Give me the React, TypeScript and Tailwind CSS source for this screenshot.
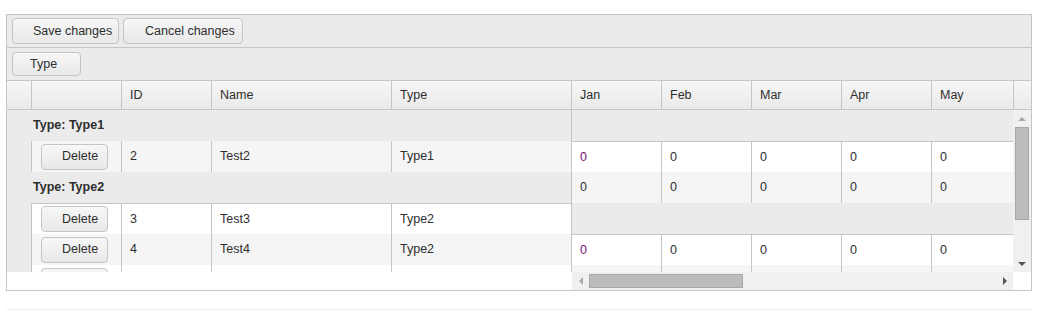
import React from 'react';

const months = ['Jan', 'Feb', 'Mar', 'Apr', 'May'];

function KButton({ label, className = '' }: { label: string; className?: string }) {
  return (
    <button
      className={`flex items-center rounded-[4px] border border-[#c5c5c5] bg-linear-to-b from-[#f7f7f7] to-[#e8e8e8] text-[#2e2e2e] ${className}`}
    >
      {label}
    </button>
  );
}

function GroupRow({ label }: { label: string }) {
  return (
    <div className="flex h-[31px] shrink-0 items-center bg-[#ebebeb] pl-[26px] font-bold">{label}</div>
  );
}

interface LockedRowProps {
  id?: string;
  name?: string;
  type?: string;
  bg: string;
  topBorder?: boolean;
  partial?: boolean;
}

function LockedRow({ id, name, type, bg, topBorder, partial }: LockedRowProps) {
  const cell = `flex items-center border-l border-[#c5c5c5] ${topBorder ? 'border-t' : ''} ${bg}`;
  return (
    <div className="flex h-[31px] shrink-0">
      <div className="w-[24px] bg-[#ebebeb]" />
      <div className={`${cell} w-[90px] pl-[9px]`}>
        {/* the last row is cut by the scroll edge, only the top of its button shows */}
        <KButton label={partial ? '' : 'Delete'} className="h-[26px] w-[67px] shrink-0 pl-[20px]" />
      </div>
      <div className={`${cell} w-[90px] pl-[8px]`}>{id}</div>
      <div className={`${cell} w-[180px] pl-[8px]`}>{name}</div>
      <div className={`${cell} w-[180px] pl-[8px]`}>{type}</div>
    </div>
  );
}

interface ValueRowProps {
  bg: string;
  topBorder?: boolean;
  purple?: boolean;
  empty?: boolean;
}

function ValueRow({ bg, topBorder, purple, empty }: ValueRowProps) {
  return (
    <div className={`flex h-[31px] w-[449px] shrink-0 ${bg} ${topBorder ? 'border-t border-[#c5c5c5]' : ''}`}>
      {months.map((m, i) => (
        <div
          key={m}
          className={`flex items-center pl-[8px] ${
            i === 0 ? 'w-[89px]' : 'w-[90px] border-l border-[#c5c5c5]'
          } ${i === 0 && purple ? 'text-[#7a0f7a]' : ''}`}
        >
          {empty ? '' : '0'}
        </div>
      ))}
    </div>
  );
}

export default function App() {
  return (
    <div
      className="min-h-screen bg-white pl-[6px] pt-[14px] text-[12.5px] text-[#2e2e2e]"
      style={{ fontFamily: '"Liberation Sans", Arial, sans-serif' }}
    >
      <div className="w-[1026px] border border-[#c5c5c5]">
        {/* Toolbar */}
        <div className="flex h-[33px] items-center gap-[4px] border-b border-[#c5c5c5] bg-[#ebebeb] px-[5px]">
          <KButton label="Save changes" className="h-[26px] w-[107px] pl-[20px]" />
          <KButton label="Cancel changes" className="h-[26px] w-[120px] pl-[21px]" />
        </div>

        {/* Group panel */}
        <div className="flex h-[33px] items-center border-b border-[#c5c5c5] bg-[#ebebeb] px-[5px]">
          <KButton label="Type" className="h-[24px] w-[69px] pl-[17px]" />
        </div>

        {/* Header */}
        <div className="flex h-[29px] border-b border-[#c5c5c5] bg-linear-to-b from-[#f6f6f6] to-[#eaeaea]">
          <div className="flex w-[565px] border-r border-[#c5c5c5]">
            <div className="w-[25px] border-r border-[#c5c5c5]" />
            <div className="w-[90px] border-r border-[#c5c5c5]" />
            <div className="flex w-[90px] items-center border-r border-[#c5c5c5] pl-[8px]">ID</div>
            <div className="flex w-[180px] items-center border-r border-[#c5c5c5] pl-[8px]">Name</div>
            <div className="flex w-[179px] items-center pl-[8px]">Type</div>
          </div>
          <div className="flex w-[441px] overflow-hidden">
            {months.map((m, i) => (
              <div
                key={m}
                className={`flex shrink-0 items-center pl-[8px] ${
                  i === 0 ? 'w-[89px]' : 'w-[90px] border-l border-[#c5c5c5]'
                }`}
              >
                {m}
              </div>
            ))}
          </div>
          <div className="w-[18px] border-l border-[#c5c5c5]" />
        </div>

        {/* Body */}
        <div className="flex h-[180px] bg-white">
          {/* Locked part */}
          <div className="flex w-[565px] flex-col">
            <div className="flex h-[162px] flex-col overflow-hidden border-r border-[#c5c5c5]">
              <GroupRow label="Type: Type1" />
              <LockedRow id="2" name="Test2" type="Type1" bg="bg-[#f5f5f5]" />
              <GroupRow label="Type: Type2" />
              <LockedRow id="3" name="Test3" type="Type2" bg="bg-white" topBorder />
              <LockedRow id="4" name="Test4" type="Type2" bg="bg-[#f5f5f5]" />
              <LockedRow bg="bg-white" partial />
            </div>
          </div>

          {/* Scrollable part */}
          <div className="flex w-[459px] flex-col">
            <div className="flex h-[162px]">
              <div className="flex w-[441px] flex-col overflow-hidden">
                <div className="h-[31px] w-[449px] shrink-0 bg-[#ebebeb]" />
                <ValueRow bg="bg-white" topBorder purple />
                <ValueRow bg="bg-[#f5f5f5]" />
                <div className="h-[31px] w-[449px] shrink-0 bg-[#ebebeb]" />
                <ValueRow bg="bg-white" topBorder purple />
                <ValueRow bg="bg-[#f5f5f5]" empty />
              </div>
              {/* Vertical scrollbar */}
              <div className="flex w-[18px] flex-col items-center bg-[#f0f0f0]">
                <div className="flex h-[17px] w-full items-center justify-center">
                  <div className="h-0 w-0 border-x-[4px] border-b-[4px] border-x-transparent border-b-[#a8a8a8]" />
                </div>
                <div className="h-[93px] w-[14px] border border-[#a8a8a8] bg-[#bcbcbc]" />
                <div className="flex-1" />
                <div className="flex h-[17px] w-full items-center justify-center">
                  <div className="h-0 w-0 border-x-[4px] border-t-[4px] border-x-transparent border-t-[#555555]" />
                </div>
              </div>
            </div>
            <div className="flex h-[18px]">
              {/* Horizontal scrollbar */}
              <div className="flex w-[441px] items-center bg-[#f0f0f0]">
                <div className="flex h-full w-[17px] items-center justify-center">
                  <div className="h-0 w-0 border-y-[4px] border-r-[4px] border-y-transparent border-r-[#a8a8a8]" />
                </div>
                <div className="h-[14px] w-[154px] border border-[#a8a8a8] bg-[#bcbcbc]" />
                <div className="flex-1" />
                <div className="flex h-full w-[17px] items-center justify-center">
                  <div className="h-0 w-0 border-y-[4px] border-l-[4px] border-y-transparent border-l-[#555555]" />
                </div>
              </div>
              <div className="w-[18px] bg-white" />
            </div>
          </div>
        </div>
      </div>
      <div className="mt-[18px] h-px w-[1026px] bg-[#eeeeee]" />
    </div>
  );
}
